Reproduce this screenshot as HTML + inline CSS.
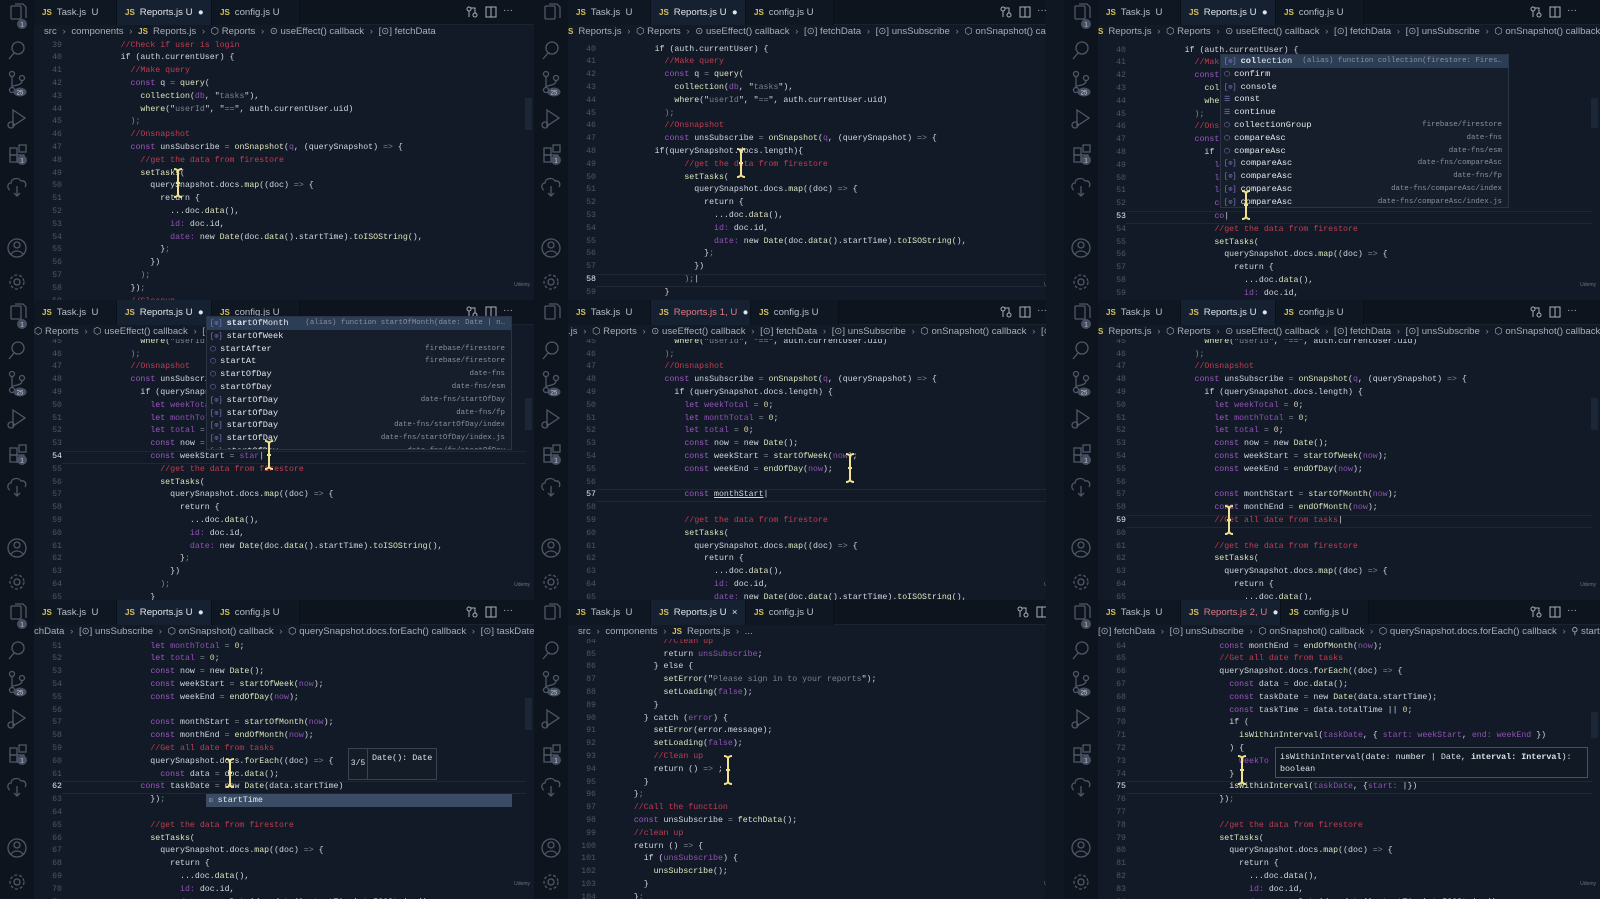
<!DOCTYPE html>
<html><head><meta charset="utf-8">
<style>
*{margin:0;padding:0;box-sizing:border-box}
body{width:1600px;height:899px;background:#101925;overflow:hidden;position:relative;font-family:"Liberation Sans",sans-serif}
.p{position:absolute;overflow:hidden;background:#111a26}
.ab{position:absolute;left:0;top:0;width:34px;height:300px;background:#0d141e}
.tb{position:absolute;left:34px;top:0;right:0;height:25px;background:#0d141e;border-bottom:1px solid #1a2330}
.tab{position:absolute;top:0;height:25px;line-height:25px;font-size:9.6px;color:#b8bec8;padding-left:8px;white-space:nowrap;background:#0f1722;border-right:1px solid #0a1019}
.tab.a{background:#152031;color:#dfe4ea}
.js{color:#d9c25c;font-weight:bold;font-size:8px;margin-right:5px}
.ti{position:absolute;top:6px;width:12px;height:12px}
.bc{position:absolute;left:34px;top:25px;right:0;height:14px;line-height:14px;font-size:9.6px;color:#a7aeb9;white-space:nowrap;padding-left:10px}
.bc i{font-style:normal;color:#7d8594;margin:0 3px}
.code{position:absolute;top:39px;left:0;right:0;bottom:0;overflow:hidden}
.in{position:absolute;left:0;right:0}
.ln{position:absolute;left:34px;width:28px;text-align:right;font-family:"Liberation Mono",monospace;font-size:8.25px;line-height:12.8px;color:#4e5665;white-space:pre}
.ln b{color:#e4e7ec;font-weight:normal}
.sr{position:absolute;left:81px;font-family:"Liberation Mono",monospace;font-size:8.25px;line-height:12.8px;color:#d3d8e0;white-space:pre}
.k{color:#a15ac6}.c{color:#c23d52}.f{color:#dfe5c0}.s{color:#7c828f}.v{color:#9153b6}.n{color:#dacf9f}.d{color:#7f8591}
.cur{position:absolute;left:62px;right:8px;height:12.8px;border-top:1px solid #1d2735;border-bottom:1px solid #1d2735}
.pop{position:absolute;background:#161e2b;border:1px solid #2b3444;font-family:"Liberation Mono",monospace;font-size:8.6px;color:#e5e8ed;overflow:hidden}
.pop div{height:12.8px;line-height:12.8px;padding-left:3px;white-space:nowrap;position:relative}
.pop div.sel{background:#2c3e56}
.pop em{font-style:normal;color:#8b7fd0;font-size:7px;margin-right:4px}
.pop span{position:absolute;right:6px;color:#8a909c;font-size:7.4px}
.sb{position:absolute;right:2px;width:7px;background:#1b2636}
.ud{position:absolute;right:4px;bottom:12px;font-size:5px;color:#6c7380}
.ib{position:absolute;width:10px;height:30px}
</style></head><body>

<!-- shared svg defs via repeated markup -->

<!-- ============ P1 ============ -->
<div class="p" style="left:0;top:0;width:534px;height:300px">
<div class="ab"><svg width="34" height="300" fill="none" stroke="#4f5867" stroke-width="1.3"><rect x="11" y="6" width="10" height="13" rx="1"/><path d="M15 4h8l3 3v11"/><circle cx="22" cy="24" r="5" fill="#465062" stroke="none"/><text x="22" y="26.5" font-size="6.5" fill="#d0d4da" stroke="none" text-anchor="middle" font-family="Liberation Sans">1</text><circle cx="18" cy="48" r="6"/><path d="M14 53l-5 6"/><circle cx="12" cy="74" r="2.5"/><circle cx="12" cy="90" r="2.5"/><circle cx="22" cy="78" r="2.5"/><path d="M12 77v10M22 81c0 5-10 4-10 6"/><ellipse cx="20" cy="92" rx="6.5" ry="4.5" fill="#465062" stroke="none"/><text x="20" y="94.5" font-size="6" fill="#d0d4da" stroke="none" text-anchor="middle" font-family="Liberation Sans">25</text><path d="M13 110l12 8-12 8z"/><circle cx="11" cy="125" r="3"/><rect x="10" y="148" width="7" height="7"/><rect x="10" y="155" width="7" height="7"/><rect x="17" y="155" width="7" height="7"/><rect x="19" y="145" width="7" height="7"/><circle cx="22" cy="160" r="5" fill="#465062" stroke="none"/><text x="22" y="162.5" font-size="6.5" fill="#d0d4da" stroke="none" text-anchor="middle" font-family="Liberation Sans">1</text><path d="M10 190c-3-1-3-7 1-7 0-5 8-6 10-2 4-1 6 3 4 6M17 186v10M14 193l3 3 3-3"/><circle cx="17" cy="248" r="9"/><circle cx="17" cy="245" r="3"/><path d="M11 254c3-4 9-4 12 0"/><circle cx="17" cy="282" r="3"/><circle cx="17" cy="282" r="7" stroke-dasharray="3 2"/></svg></div>
<div class="tb"><div class="tab" style="left:0;width:83px"><span class="js">JS</span>Task.js&nbsp; U</div><div class="tab a" style="left:83px;width:95px"><span class="js">JS</span>Reports.js U&nbsp; ●</div><div class="tab" style="left:178px;width:88px"><span class="js">JS</span>config.js U</div>
<svg class="ti" style="left:432px" fill="none" stroke="#aab0ba"><circle cx="3" cy="3" r="2"/><circle cx="9" cy="9" r="2"/><path d="M3 5v6M9 7V2H5"/></svg><svg class="ti" style="left:451px" fill="none" stroke="#aab0ba"><rect x="1" y="1" width="10" height="10"/><path d="M6 1v10"/></svg><div style="position:absolute;left:469px;top:0;line-height:22px;color:#aab0ba;font-size:10px">···</div></div>
<div class="bc">src <i>›</i> components <i>›</i> <span class="js">JS</span>Reports.js <i>›</i> ⬡ Reports <i>›</i> ⊙ useEffect() callback <i>›</i> [⊙] fetchData</div>
<div class="code"><div class="in" style="top:0.6px">
<div class="ln">39
40
41
42
43
44
45
46
47
48
49
50
51
52
53
54
55
56
57
58
59</div>
<div class="sr">        <span class="c">//Check if user is login</span>
        if (auth.currentUser) {
          <span class="c">//Make query</span>
          <span class="k">const</span> q <span class="d">=</span> <span class="f">query</span>(
            <span class="f">collection</span>(<span class="v">db</span>, "<span class="s">tasks</span>"),
            <span class="f">where</span>("<span class="s">userId</span>", "<span class="s">==</span>", auth.currentUser.uid)
          <span class="d">);</span>
          <span class="c">//Onsnapshot</span>
          <span class="k">const</span> unsSubscribe <span class="d">=</span> <span class="f">onSnapshot</span>(<span class="v">q</span>, (querySnapshot) <span class="d">=&gt;</span> {
            <span class="c">//get the data from firestore</span>
            <span class="f">setTasks</span>(
              querySnapshot.docs.<span class="f">map</span>((doc) <span class="d">=&gt;</span> {
                return {
                  ...doc.<span class="f">data</span>(),
                  <span class="v">id:</span> doc.id,
                  <span class="v">date:</span> new <span class="f">Date</span>(doc.<span class="f">data</span>().startTime).<span class="f">toISOString</span>(),
                }<span class="d">;</span>
              })
            <span class="d">);</span>
          })<span class="d">;</span>
          <span class="c">//Cleanup</span></div></div></div>
<div class="sb" style="top:98px;height:32px"></div>
<svg class="ib" style="left:173px;top:168px" viewBox="0 0 10 30" fill="none" stroke="#f2e28c" stroke-width="2"><path d="M1 1c2 0 4 1 4 3v22c0 2-2 3-4 3M9 1c-2 0-4 1-4 3v22c0 2 2 3 4 3M3 15h4"/></svg>
<div class="ud">Udemy</div></div>

<!-- ============ P2 ============ -->
<div class="p" style="left:534px;top:0;width:530px;height:300px">
<div class="ab"><svg width="34" height="300" fill="none" stroke="#4f5867" stroke-width="1.3"><rect x="11" y="6" width="10" height="13" rx="1"/><path d="M15 4h8l3 3v11"/><circle cx="18" cy="48" r="6"/><path d="M14 53l-5 6"/><circle cx="12" cy="74" r="2.5"/><circle cx="12" cy="90" r="2.5"/><circle cx="22" cy="78" r="2.5"/><path d="M12 77v10M22 81c0 5-10 4-10 6"/><ellipse cx="20" cy="92" rx="6.5" ry="4.5" fill="#465062" stroke="none"/><text x="20" y="94.5" font-size="6" fill="#d0d4da" stroke="none" text-anchor="middle" font-family="Liberation Sans">25</text><path d="M13 110l12 8-12 8z"/><circle cx="11" cy="125" r="3"/><rect x="10" y="148" width="7" height="7"/><rect x="10" y="155" width="7" height="7"/><rect x="17" y="155" width="7" height="7"/><rect x="19" y="145" width="7" height="7"/><circle cx="22" cy="160" r="5" fill="#465062" stroke="none"/><text x="22" y="162.5" font-size="6.5" fill="#d0d4da" stroke="none" text-anchor="middle" font-family="Liberation Sans">1</text><path d="M10 190c-3-1-3-7 1-7 0-5 8-6 10-2 4-1 6 3 4 6M17 186v10M14 193l3 3 3-3"/><circle cx="17" cy="248" r="9"/><circle cx="17" cy="245" r="3"/><path d="M11 254c3-4 9-4 12 0"/><circle cx="17" cy="282" r="3"/><circle cx="17" cy="282" r="7" stroke-dasharray="3 2"/></svg></div>
<div class="tb"><div class="tab" style="left:0;width:83px"><span class="js">JS</span>Task.js&nbsp; U</div><div class="tab a" style="left:83px;width:95px"><span class="js">JS</span>Reports.js U&nbsp; ●</div><div class="tab" style="left:178px;width:88px"><span class="js">JS</span>config.js U</div>
<svg class="ti" style="left:432px" fill="none" stroke="#aab0ba"><circle cx="3" cy="3" r="2"/><circle cx="9" cy="9" r="2"/><path d="M3 5v6M9 7V2H5"/></svg><svg class="ti" style="left:451px" fill="none" stroke="#aab0ba"><rect x="1" y="1" width="10" height="10"/><path d="M6 1v10"/></svg><div style="position:absolute;left:469px;top:0;line-height:22px;color:#aab0ba;font-size:10px">···</div></div>
<div class="bc" style="padding-left:0"><span class="js">S</span>Reports.js <i>›</i> ⬡ Reports <i>›</i> ⊙ useEffect() callback <i>›</i> [⊙] fetchData <i>›</i> [⊙] unsSubscribe <i>›</i> ⬡ onSnapshot() callback</div>
<div class="code"><div class="in" style="top:4.6px">
<div class="cur" style="top:230.4px"></div>
<div class="ln">40
41
42
43
44
45
46
47
48
49
50
51
52
53
54
55
56
57
<b>58</b>
59</div>
<div class="sr">        if (auth.currentUser) {
          <span class="c">//Make query</span>
          <span class="k">const</span> q <span class="d">=</span> <span class="f">query</span>(
            <span class="f">collection</span>(<span class="v">db</span>, "<span class="s">tasks</span>"),
            <span class="f">where</span>("<span class="s">userId</span>", "<span class="s">==</span>", auth.currentUser.uid)
          <span class="d">);</span>
          <span class="c">//Onsnapshot</span>
          <span class="k">const</span> unsSubscribe <span class="d">=</span> <span class="f">onSnapshot</span>(<span class="v">q</span>, (querySnapshot) <span class="d">=&gt;</span> {
        if(querySnapshot.docs.length){
              <span class="c">//get the data from firestore</span>
              <span class="f">setTasks</span>(
                querySnapshot.docs.<span class="f">map</span>((doc) <span class="d">=&gt;</span> {
                  return {
                    ...doc.<span class="f">data</span>(),
                    <span class="v">id:</span> doc.id,
                    <span class="v">date:</span> new <span class="f">Date</span>(doc.<span class="f">data</span>().startTime).<span class="f">toISOString</span>(),
                  }<span class="d">;</span>
                })
              <span class="d">);</span>|
          }</div></div></div>
<div class="sb" style="top:98px;height:32px"></div>
<svg class="ib" style="left:202px;top:148px" viewBox="0 0 10 30" fill="none" stroke="#f2e28c" stroke-width="2"><path d="M1 1c2 0 4 1 4 3v22c0 2-2 3-4 3M9 1c-2 0-4 1-4 3v22c0 2 2 3 4 3M3 15h4"/></svg>
<div class="ud">Udemy</div></div>

<!-- ============ P3 ============ -->
<div class="p" style="left:1064px;top:0;width:536px;height:300px">
<div class="ab"><svg width="34" height="300" fill="none" stroke="#4f5867" stroke-width="1.3"><rect x="11" y="6" width="10" height="13" rx="1"/><path d="M15 4h8l3 3v11"/><circle cx="22" cy="24" r="5" fill="#465062" stroke="none"/><text x="22" y="26.5" font-size="6.5" fill="#d0d4da" stroke="none" text-anchor="middle" font-family="Liberation Sans">1</text><circle cx="18" cy="48" r="6"/><path d="M14 53l-5 6"/><circle cx="12" cy="74" r="2.5"/><circle cx="12" cy="90" r="2.5"/><circle cx="22" cy="78" r="2.5"/><path d="M12 77v10M22 81c0 5-10 4-10 6"/><ellipse cx="20" cy="92" rx="6.5" ry="4.5" fill="#465062" stroke="none"/><text x="20" y="94.5" font-size="6" fill="#d0d4da" stroke="none" text-anchor="middle" font-family="Liberation Sans">25</text><path d="M13 110l12 8-12 8z"/><circle cx="11" cy="125" r="3"/><rect x="10" y="148" width="7" height="7"/><rect x="10" y="155" width="7" height="7"/><rect x="17" y="155" width="7" height="7"/><rect x="19" y="145" width="7" height="7"/><circle cx="22" cy="160" r="5" fill="#465062" stroke="none"/><text x="22" y="162.5" font-size="6.5" fill="#d0d4da" stroke="none" text-anchor="middle" font-family="Liberation Sans">1</text><path d="M10 190c-3-1-3-7 1-7 0-5 8-6 10-2 4-1 6 3 4 6M17 186v10M14 193l3 3 3-3"/><circle cx="17" cy="248" r="9"/><circle cx="17" cy="245" r="3"/><path d="M11 254c3-4 9-4 12 0"/><circle cx="17" cy="282" r="3"/><circle cx="17" cy="282" r="7" stroke-dasharray="3 2"/></svg></div>
<div class="tb"><div class="tab" style="left:0;width:83px"><span class="js">JS</span>Task.js&nbsp; U</div><div class="tab a" style="left:83px;width:95px"><span class="js">JS</span>Reports.js U&nbsp; ●</div><div class="tab" style="left:178px;width:88px"><span class="js">JS</span>config.js U</div>
<svg class="ti" style="left:432px" fill="none" stroke="#aab0ba"><circle cx="3" cy="3" r="2"/><circle cx="9" cy="9" r="2"/><path d="M3 5v6M9 7V2H5"/></svg><svg class="ti" style="left:451px" fill="none" stroke="#aab0ba"><rect x="1" y="1" width="10" height="10"/><path d="M6 1v10"/></svg><div style="position:absolute;left:469px;top:0;line-height:22px;color:#aab0ba;font-size:10px">···</div></div>
<div class="bc" style="padding-left:0"><span class="js">S</span>Reports.js <i>›</i> ⬡ Reports <i>›</i> ⊙ useEffect() callback <i>›</i> [⊙] fetchData <i>›</i> [⊙] unsSubscribe <i>›</i> ⬡ onSnapshot() callback</div>
<div class="code"><div class="in" style="top:5.6px">
<div class="cur" style="top:166.4px"></div>
<div class="ln">40
41
42
43
44
45
46
47
48
49
50
51
52
<b>53</b>
54
55
56
57
58
59</div>
<div class="sr">        if (auth.currentUser) {
          <span class="c">//Make query</span>
          <span class="k">const</span> q <span class="d">=</span> <span class="f">query</span>(
            <span class="f">collection</span>(<span class="v">db</span>, "<span class="s">tasks</span>"),
            <span class="f">where</span>("<span class="s">userId</span>", "<span class="s">==</span>", auth.currentUser.uid)
          <span class="d">);</span>
          <span class="c">//Onsnapshot</span>
          <span class="k">const</span> unsSubscribe <span class="d">=</span> <span class="f">onSnapshot</span>(<span class="v">q</span>, (querySnapshot) <span class="d">=&gt;</span> {
            if (querySnapshot.docs.length) {
              <span class="k">let</span> <span class="v">weekTotal</span> <span class="d">=</span> <span class="n">0</span>;
              <span class="k">let</span> <span class="v">monthTotal</span> <span class="d">=</span> <span class="n">0</span>;
              <span class="k">let</span> <span class="v">total</span> <span class="d">=</span> <span class="n">0</span>;
              <span class="k">const</span> now <span class="d">=</span> new <span class="f">Date</span>();
              <span class="k">co</span>|
              <span class="c">//get the data from firestore</span>
              <span class="f">setTasks</span>(
                querySnapshot.docs.<span class="f">map</span>((doc) <span class="d">=&gt;</span> {
                  return {
                    ...doc.<span class="f">data</span>(),
                    <span class="v">id:</span> doc.id,</div></div></div>
<div class="pop" style="left:156px;top:54px;width:289px;height:154px">
<div class="sel"><em>[⊙]</em><b>col</b>lection<span>(alias) function collection(firestore: Fires…</span></div>
<div><em>⬡</em>confirm</div>
<div><em>[⊙]</em>console</div>
<div><em>☰</em>const</div>
<div><em>☰</em>continue</div>
<div><em>⬡</em>collectionGroup<span>firebase/firestore</span></div>
<div><em>⬡</em>compareAsc<span>date-fns</span></div>
<div><em>⬡</em>compareAsc<span>date-fns/esm</span></div>
<div><em>[⊙]</em>compareAsc<span>date-fns/compareAsc</span></div>
<div><em>[⊙]</em>compareAsc<span>date-fns/fp</span></div>
<div><em>[⊙]</em>compareAsc<span>date-fns/compareAsc/index</span></div>
<div><em>[⊙]</em>compareAsc<span>date-fns/compareAsc/index.js</span></div>
</div>
<div class="sb" style="top:98px;height:30px"></div>
<svg class="ib" style="left:177px;top:190px" viewBox="0 0 10 30" fill="none" stroke="#f2e28c" stroke-width="2"><path d="M1 1c2 0 4 1 4 3v22c0 2-2 3-4 3M9 1c-2 0-4 1-4 3v22c0 2 2 3 4 3M3 15h4"/></svg>
<div class="ud">Udemy</div></div>

<!-- ============ P4 ============ -->
<div class="p" style="left:0;top:300px;width:534px;height:300px">
<div class="ab"><svg width="34" height="300" fill="none" stroke="#4f5867" stroke-width="1.3"><rect x="11" y="6" width="10" height="13" rx="1"/><path d="M15 4h8l3 3v11"/><circle cx="22" cy="24" r="5" fill="#465062" stroke="none"/><text x="22" y="26.5" font-size="6.5" fill="#d0d4da" stroke="none" text-anchor="middle" font-family="Liberation Sans">1</text><circle cx="18" cy="48" r="6"/><path d="M14 53l-5 6"/><circle cx="12" cy="74" r="2.5"/><circle cx="12" cy="90" r="2.5"/><circle cx="22" cy="78" r="2.5"/><path d="M12 77v10M22 81c0 5-10 4-10 6"/><ellipse cx="20" cy="92" rx="6.5" ry="4.5" fill="#465062" stroke="none"/><text x="20" y="94.5" font-size="6" fill="#d0d4da" stroke="none" text-anchor="middle" font-family="Liberation Sans">25</text><path d="M13 110l12 8-12 8z"/><circle cx="11" cy="125" r="3"/><rect x="10" y="148" width="7" height="7"/><rect x="10" y="155" width="7" height="7"/><rect x="17" y="155" width="7" height="7"/><rect x="19" y="145" width="7" height="7"/><circle cx="22" cy="160" r="5" fill="#465062" stroke="none"/><text x="22" y="162.5" font-size="6.5" fill="#d0d4da" stroke="none" text-anchor="middle" font-family="Liberation Sans">1</text><path d="M10 190c-3-1-3-7 1-7 0-5 8-6 10-2 4-1 6 3 4 6M17 186v10M14 193l3 3 3-3"/><circle cx="17" cy="248" r="9"/><circle cx="17" cy="245" r="3"/><path d="M11 254c3-4 9-4 12 0"/><circle cx="17" cy="282" r="3"/><circle cx="17" cy="282" r="7" stroke-dasharray="3 2"/></svg></div>
<div class="tb"><div class="tab" style="left:0;width:83px"><span class="js">JS</span>Task.js&nbsp; U</div><div class="tab a" style="left:83px;width:95px"><span class="js">JS</span>Reports.js U&nbsp; ●</div><div class="tab" style="left:178px;width:88px"><span class="js">JS</span>config.js U</div>
<svg class="ti" style="left:432px" fill="none" stroke="#aab0ba"><circle cx="3" cy="3" r="2"/><circle cx="9" cy="9" r="2"/><path d="M3 5v6M9 7V2H5"/></svg><svg class="ti" style="left:451px" fill="none" stroke="#aab0ba"><rect x="1" y="1" width="10" height="10"/><path d="M6 1v10"/></svg><div style="position:absolute;left:469px;top:0;line-height:22px;color:#aab0ba;font-size:10px">···</div></div>
<div class="bc" style="padding-left:0">⬡ Reports <i>›</i> ⬡ useEffect() callback <i>›</i> [⊙]</div>
<div class="code"><div class="in" style="top:-3.2px">
<div class="cur" style="top:115.2px"></div>
<div class="ln">45
46
47
48
49
50
51
52
53
<b>54</b>
55
56
57
58
59
60
61
62
63
64
65</div>
<div class="sr">            <span class="f">where</span>("<span class="s">userId</span>", "<span class="s">==</span>", auth.currentUser.uid)
          <span class="d">);</span>
          <span class="c">//Onsnapshot</span>
          <span class="k">const</span> unsSubscribe <span class="d">=</span> <span class="f">onSnapshot</span>(<span class="v">q</span>, (querySnapshot) <span class="d">=&gt;</span> {
            if (querySnapshot.docs.length) {
              <span class="k">let</span> <span class="v">weekTotal</span> <span class="d">=</span> <span class="n">0</span>;
              <span class="k">let</span> <span class="v">monthTotal</span> <span class="d">=</span> <span class="n">0</span>;
              <span class="k">let</span> <span class="v">total</span> <span class="d">=</span> <span class="n">0</span>;
              <span class="k">const</span> now <span class="d">=</span> new <span class="f">Date</span>();
              <span class="k">const</span> weekStart <span class="d">=</span> <span class="v">star</span>|
                <span class="c">//get the data from firestore</span>
                <span class="f">setTasks</span>(
                  querySnapshot.docs.<span class="f">map</span>((doc) <span class="d">=&gt;</span> {
                    return {
                      ...doc.<span class="f">data</span>(),
                      <span class="v">id:</span> doc.id,
                      <span class="v">date:</span> new <span class="f">Date</span>(doc.<span class="f">data</span>().startTime).<span class="f">toISOString</span>(),
                    }<span class="d">;</span>
                  })
                <span class="d">);</span>
              }</div></div></div>
<div class="pop" style="left:206px;top:16px;width:306px;height:134px">
<div class="sel"><em>[⊙]</em><b>star</b>tOfMonth<span>(alias) function startOfMonth(date: Date | n…</span></div>
<div><em>[⊙]</em>startOfWeek</div>
<div><em>⬡</em>startAfter<span>firebase/firestore</span></div>
<div><em>⬡</em>startAt<span>firebase/firestore</span></div>
<div><em>⬡</em>startOfDay<span>date-fns</span></div>
<div><em>⬡</em>startOfDay<span>date-fns/esm</span></div>
<div><em>[⊙]</em>startOfDay<span>date-fns/startOfDay</span></div>
<div><em>[⊙]</em>startOfDay<span>date-fns/fp</span></div>
<div><em>[⊙]</em>startOfDay<span>date-fns/startOfDay/index</span></div>
<div><em>[⊙]</em>startOfDay<span>date-fns/startOfDay/index.js</span></div>
<div><em>[⊙]</em>startOfDay<span>date-fns/fp/startOfDay</span></div>
</div>
<div class="sb" style="top:98px;height:32px"></div>
<svg class="ib" style="left:264px;top:140px" viewBox="0 0 10 30" fill="none" stroke="#f2e28c" stroke-width="2"><path d="M1 1c2 0 4 1 4 3v22c0 2-2 3-4 3M9 1c-2 0-4 1-4 3v22c0 2 2 3 4 3M3 15h4"/></svg>
<div class="ud">Udemy</div></div>

<!-- ============ P5 ============ -->
<div class="p" style="left:534px;top:300px;width:530px;height:300px">
<div class="ab"><svg width="34" height="300" fill="none" stroke="#4f5867" stroke-width="1.3"><rect x="11" y="6" width="10" height="13" rx="1"/><path d="M15 4h8l3 3v11"/><circle cx="18" cy="48" r="6"/><path d="M14 53l-5 6"/><circle cx="12" cy="74" r="2.5"/><circle cx="12" cy="90" r="2.5"/><circle cx="22" cy="78" r="2.5"/><path d="M12 77v10M22 81c0 5-10 4-10 6"/><ellipse cx="20" cy="92" rx="6.5" ry="4.5" fill="#465062" stroke="none"/><text x="20" y="94.5" font-size="6" fill="#d0d4da" stroke="none" text-anchor="middle" font-family="Liberation Sans">25</text><path d="M13 110l12 8-12 8z"/><circle cx="11" cy="125" r="3"/><rect x="10" y="148" width="7" height="7"/><rect x="10" y="155" width="7" height="7"/><rect x="17" y="155" width="7" height="7"/><rect x="19" y="145" width="7" height="7"/><circle cx="22" cy="160" r="5" fill="#465062" stroke="none"/><text x="22" y="162.5" font-size="6.5" fill="#d0d4da" stroke="none" text-anchor="middle" font-family="Liberation Sans">1</text><path d="M10 190c-3-1-3-7 1-7 0-5 8-6 10-2 4-1 6 3 4 6M17 186v10M14 193l3 3 3-3"/><circle cx="17" cy="248" r="9"/><circle cx="17" cy="245" r="3"/><path d="M11 254c3-4 9-4 12 0"/><circle cx="17" cy="282" r="3"/><circle cx="17" cy="282" r="7" stroke-dasharray="3 2"/></svg></div>
<div class="tb"><div class="tab" style="left:0;width:83px"><span class="js">JS</span>Task.js&nbsp; U</div><div class="tab a" style="left:83px;width:100px"><span class="js">JS</span><span style="color:#e07a82">Reports.js 1, U</span>&nbsp; ●</div><div class="tab" style="left:183px;width:88px"><span class="js">JS</span>config.js U</div>
<svg class="ti" style="left:432px" fill="none" stroke="#aab0ba"><circle cx="3" cy="3" r="2"/><circle cx="9" cy="9" r="2"/><path d="M3 5v6M9 7V2H5"/></svg><svg class="ti" style="left:451px" fill="none" stroke="#aab0ba"><rect x="1" y="1" width="10" height="10"/><path d="M6 1v10"/></svg><div style="position:absolute;left:469px;top:0;line-height:22px;color:#aab0ba;font-size:10px">···</div></div>
<div class="bc" style="padding-left:0">.js <i>›</i> ⬡ Reports <i>›</i> ⊙ useEffect() callback <i>›</i> [⊙] fetchData <i>›</i> [⊙] unsSubscribe <i>›</i> ⬡ onSnapshot() callback <i>›</i> [⊙] montl</div>
<div class="code"><div class="in" style="top:-3.2px">
<div class="cur" style="top:153.6px"></div>
<div class="ln">45
46
47
48
49
50
51
52
53
54
55
56
<b>57</b>
58
59
60
61
62
63
64
65</div>
<div class="sr">            <span class="f">where</span>("<span class="s">userId</span>", "<span class="s">==</span>", auth.currentUser.uid)
          <span class="d">);</span>
          <span class="c">//Onsnapshot</span>
          <span class="k">const</span> unsSubscribe <span class="d">=</span> <span class="f">onSnapshot</span>(<span class="v">q</span>, (querySnapshot) <span class="d">=&gt;</span> {
            if (querySnapshot.docs.length) {
              <span class="k">let</span> <span class="v">weekTotal</span> <span class="d">=</span> <span class="n">0</span>;
              <span class="k">let</span> <span class="v">monthTotal</span> <span class="d">=</span> <span class="n">0</span>;
              <span class="k">let</span> <span class="v">total</span> <span class="d">=</span> <span class="n">0</span>;
              <span class="k">const</span> now <span class="d">=</span> new <span class="f">Date</span>();
              <span class="k">const</span> weekStart <span class="d">=</span> <span class="f">startOfWeek</span>(<span class="v">now</span>);
              <span class="k">const</span> weekEnd <span class="d">=</span> <span class="f">endOfDay</span>(<span class="v">now</span>);

              <span class="k">const</span> <u>monthStart</u>|

              <span class="c">//get the data from firestore</span>
              <span class="f">setTasks</span>(
                querySnapshot.docs.<span class="f">map</span>((doc) <span class="d">=&gt;</span> {
                  return {
                    ...doc.<span class="f">data</span>(),
                    <span class="v">id:</span> doc.id,
                    <span class="v">date:</span> new <span class="f">Date</span>(doc.<span class="f">data</span>().startTime).<span class="f">toISOString</span>(),</div></div></div>
<div class="sb" style="top:98px;height:32px"></div>
<svg class="ib" style="left:311px;top:153px" viewBox="0 0 10 30" fill="none" stroke="#f2e28c" stroke-width="2"><path d="M1 1c2 0 4 1 4 3v22c0 2-2 3-4 3M9 1c-2 0-4 1-4 3v22c0 2 2 3 4 3M3 15h4"/></svg>
<div class="ud">Udemy</div></div>

<!-- ============ P6 ============ -->
<div class="p" style="left:1064px;top:300px;width:536px;height:300px">
<div class="ab"><svg width="34" height="300" fill="none" stroke="#4f5867" stroke-width="1.3"><rect x="11" y="6" width="10" height="13" rx="1"/><path d="M15 4h8l3 3v11"/><circle cx="22" cy="24" r="5" fill="#465062" stroke="none"/><text x="22" y="26.5" font-size="6.5" fill="#d0d4da" stroke="none" text-anchor="middle" font-family="Liberation Sans">1</text><circle cx="18" cy="48" r="6"/><path d="M14 53l-5 6"/><circle cx="12" cy="74" r="2.5"/><circle cx="12" cy="90" r="2.5"/><circle cx="22" cy="78" r="2.5"/><path d="M12 77v10M22 81c0 5-10 4-10 6"/><ellipse cx="20" cy="92" rx="6.5" ry="4.5" fill="#465062" stroke="none"/><text x="20" y="94.5" font-size="6" fill="#d0d4da" stroke="none" text-anchor="middle" font-family="Liberation Sans">25</text><path d="M13 110l12 8-12 8z"/><circle cx="11" cy="125" r="3"/><rect x="10" y="148" width="7" height="7"/><rect x="10" y="155" width="7" height="7"/><rect x="17" y="155" width="7" height="7"/><rect x="19" y="145" width="7" height="7"/><circle cx="22" cy="160" r="5" fill="#465062" stroke="none"/><text x="22" y="162.5" font-size="6.5" fill="#d0d4da" stroke="none" text-anchor="middle" font-family="Liberation Sans">1</text><path d="M10 190c-3-1-3-7 1-7 0-5 8-6 10-2 4-1 6 3 4 6M17 186v10M14 193l3 3 3-3"/><circle cx="17" cy="248" r="9"/><circle cx="17" cy="245" r="3"/><path d="M11 254c3-4 9-4 12 0"/><circle cx="17" cy="282" r="3"/><circle cx="17" cy="282" r="7" stroke-dasharray="3 2"/></svg></div>
<div class="tb"><div class="tab" style="left:0;width:83px"><span class="js">JS</span>Task.js&nbsp; U</div><div class="tab a" style="left:83px;width:95px"><span class="js">JS</span>Reports.js U&nbsp; ●</div><div class="tab" style="left:178px;width:88px"><span class="js">JS</span>config.js U</div>
<svg class="ti" style="left:432px" fill="none" stroke="#aab0ba"><circle cx="3" cy="3" r="2"/><circle cx="9" cy="9" r="2"/><path d="M3 5v6M9 7V2H5"/></svg><svg class="ti" style="left:451px" fill="none" stroke="#aab0ba"><rect x="1" y="1" width="10" height="10"/><path d="M6 1v10"/></svg><div style="position:absolute;left:469px;top:0;line-height:22px;color:#aab0ba;font-size:10px">···</div></div>
<div class="bc" style="padding-left:0"><span class="js">S</span>Reports.js <i>›</i> ⬡ Reports <i>›</i> ⊙ useEffect() callback <i>›</i> [⊙] fetchData <i>›</i> [⊙] unsSubscribe <i>›</i> ⬡ onSnapshot() callback</div>
<div class="code"><div class="in" style="top:-3.2px">
<div class="cur" style="top:179.2px"></div>
<div class="ln">45
46
47
48
49
50
51
52
53
54
55
56
57
58
<b>59</b>
60
61
62
63
64
65</div>
<div class="sr">            <span class="f">where</span>("<span class="s">userId</span>", "<span class="s">==</span>", auth.currentUser.uid)
          <span class="d">);</span>
          <span class="c">//Onsnapshot</span>
          <span class="k">const</span> unsSubscribe <span class="d">=</span> <span class="f">onSnapshot</span>(<span class="v">q</span>, (querySnapshot) <span class="d">=&gt;</span> {
            if (querySnapshot.docs.length) {
              <span class="k">let</span> <span class="v">weekTotal</span> <span class="d">=</span> <span class="n">0</span>;
              <span class="k">let</span> <span class="v">monthTotal</span> <span class="d">=</span> <span class="n">0</span>;
              <span class="k">let</span> <span class="v">total</span> <span class="d">=</span> <span class="n">0</span>;
              <span class="k">const</span> now <span class="d">=</span> new <span class="f">Date</span>();
              <span class="k">const</span> weekStart <span class="d">=</span> <span class="f">startOfWeek</span>(<span class="v">now</span>);
              <span class="k">const</span> weekEnd <span class="d">=</span> <span class="f">endOfDay</span>(<span class="v">now</span>);

              <span class="k">const</span> monthStart <span class="d">=</span> <span class="f">startOfMonth</span>(<span class="v">now</span>);
              <span class="k">const</span> monthEnd <span class="d">=</span> <span class="f">endOfMonth</span>(<span class="v">now</span>);
              <span class="c">//Get all date from tasks</span>|

              <span class="c">//get the data from firestore</span>
              <span class="f">setTasks</span>(
                querySnapshot.docs.<span class="f">map</span>((doc) <span class="d">=&gt;</span> {
                  return {
                    ...doc.<span class="f">data</span>(),</div></div></div>
<div class="sb" style="top:98px;height:32px"></div>
<svg class="ib" style="left:160px;top:205px" viewBox="0 0 10 30" fill="none" stroke="#f2e28c" stroke-width="2"><path d="M1 1c2 0 4 1 4 3v22c0 2-2 3-4 3M9 1c-2 0-4 1-4 3v22c0 2 2 3 4 3M3 15h4"/></svg>
<div class="ud">Udemy</div></div>

<!-- ============ P7 ============ -->
<div class="p" style="left:0;top:600px;width:534px;height:299px">
<div class="ab"><svg width="34" height="300" fill="none" stroke="#4f5867" stroke-width="1.3"><rect x="11" y="6" width="10" height="13" rx="1"/><path d="M15 4h8l3 3v11"/><circle cx="22" cy="24" r="5" fill="#465062" stroke="none"/><text x="22" y="26.5" font-size="6.5" fill="#d0d4da" stroke="none" text-anchor="middle" font-family="Liberation Sans">1</text><circle cx="18" cy="48" r="6"/><path d="M14 53l-5 6"/><circle cx="12" cy="74" r="2.5"/><circle cx="12" cy="90" r="2.5"/><circle cx="22" cy="78" r="2.5"/><path d="M12 77v10M22 81c0 5-10 4-10 6"/><ellipse cx="20" cy="92" rx="6.5" ry="4.5" fill="#465062" stroke="none"/><text x="20" y="94.5" font-size="6" fill="#d0d4da" stroke="none" text-anchor="middle" font-family="Liberation Sans">25</text><path d="M13 110l12 8-12 8z"/><circle cx="11" cy="125" r="3"/><rect x="10" y="148" width="7" height="7"/><rect x="10" y="155" width="7" height="7"/><rect x="17" y="155" width="7" height="7"/><rect x="19" y="145" width="7" height="7"/><circle cx="22" cy="160" r="5" fill="#465062" stroke="none"/><text x="22" y="162.5" font-size="6.5" fill="#d0d4da" stroke="none" text-anchor="middle" font-family="Liberation Sans">1</text><path d="M10 190c-3-1-3-7 1-7 0-5 8-6 10-2 4-1 6 3 4 6M17 186v10M14 193l3 3 3-3"/><circle cx="17" cy="248" r="9"/><circle cx="17" cy="245" r="3"/><path d="M11 254c3-4 9-4 12 0"/><circle cx="17" cy="282" r="3"/><circle cx="17" cy="282" r="7" stroke-dasharray="3 2"/></svg></div>
<div class="tb"><div class="tab" style="left:0;width:83px"><span class="js">JS</span>Task.js&nbsp; U</div><div class="tab a" style="left:83px;width:95px"><span class="js">JS</span>Reports.js U&nbsp; ●</div><div class="tab" style="left:178px;width:88px"><span class="js">JS</span>config.js U</div>
<svg class="ti" style="left:432px" fill="none" stroke="#aab0ba"><circle cx="3" cy="3" r="2"/><circle cx="9" cy="9" r="2"/><path d="M3 5v6M9 7V2H5"/></svg><svg class="ti" style="left:451px" fill="none" stroke="#aab0ba"><rect x="1" y="1" width="10" height="10"/><path d="M6 1v10"/></svg><div style="position:absolute;left:469px;top:0;line-height:22px;color:#aab0ba;font-size:10px">···</div></div>
<div class="bc" style="padding-left:0">chData <i>›</i> [⊙] unsSubscribe <i>›</i> ⬡ onSnapshot() callback <i>›</i> ⬡ querySnapshot.docs.forEach() callback <i>›</i> [⊙] taskDate</div>
<div class="code"><div class="in" style="top:1.6px">
<div class="cur" style="top:140.8px"></div>
<div class="ln">51
52
53
54
55
56
57
58
59
60
61
<b>62</b>
63
64
65
66
67
68
69
70
71</div>
<div class="sr">              <span class="k">let</span> <span class="v">monthTotal</span> <span class="d">=</span> <span class="n">0</span>;
              <span class="k">let</span> <span class="v">total</span> <span class="d">=</span> <span class="n">0</span>;
              <span class="k">const</span> now <span class="d">=</span> new <span class="f">Date</span>();
              <span class="k">const</span> weekStart <span class="d">=</span> <span class="f">startOfWeek</span>(<span class="v">now</span>);
              <span class="k">const</span> weekEnd <span class="d">=</span> <span class="f">endOfDay</span>(<span class="v">now</span>);

              <span class="k">const</span> monthStart <span class="d">=</span> <span class="f">startOfMonth</span>(<span class="v">now</span>);
              <span class="k">const</span> monthEnd <span class="d">=</span> <span class="f">endOfMonth</span>(<span class="v">now</span>);
              <span class="c">//Get all date from tasks</span>
              querySnapshot.docs.<span class="f">forEach</span>((doc) <span class="d">=&gt;</span> {
                <span class="k">const</span> data <span class="d">=</span> doc.<span class="f">data</span>();
            <span class="k">const</span> taskDate <span class="d">=</span> new <span class="f">Date</span>(data.startTime)
              })<span class="d">;</span>

              <span class="c">//get the data from firestore</span>
              <span class="f">setTasks</span>(
                querySnapshot.docs.<span class="f">map</span>((doc) <span class="d">=&gt;</span> {
                  return {
                    ...doc.<span class="f">data</span>(),
                    <span class="v">id:</span> doc.id,
                    <span class="v">date:</span> new <span class="f">Date</span>(doc.<span class="f">data</span>().startTime).<span class="f">toISOString</span>(),</div></div></div>
<div style="position:absolute;left:348px;top:148px;width:89px;height:32px;background:#141c28;border:1px solid #3a4352;font-family:'Liberation Mono',monospace;font-size:8.4px;color:#dfe3e8"><div style="position:absolute;left:0;top:0;width:19px;height:30px;border-right:1px solid #3a4352;text-align:center;line-height:30px;font-size:8px">3/5</div><div style="position:absolute;left:23px;top:4px">Date(): Date</div></div>
<div style="position:absolute;left:206px;top:194px;width:306px;height:12.5px;background:#3a4c64;font-family:'Liberation Mono',monospace;font-size:8.4px;color:#e8ebef;line-height:12.5px;padding-left:3px"><span style="font-size:6px;color:#aab">⊡</span> startTime</div>
<div class="sb" style="top:98px;height:32px"></div>
<svg class="ib" style="left:225px;top:158px" viewBox="0 0 10 30" fill="none" stroke="#f2e28c" stroke-width="2"><path d="M1 1c2 0 4 1 4 3v22c0 2-2 3-4 3M9 1c-2 0-4 1-4 3v22c0 2 2 3 4 3M3 15h4"/></svg>
<div class="ud">Udemy</div></div>

<!-- ============ P8 ============ -->
<div class="p" style="left:534px;top:600px;width:530px;height:299px">
<div class="ab"><svg width="34" height="300" fill="none" stroke="#4f5867" stroke-width="1.3"><rect x="11" y="6" width="10" height="13" rx="1"/><path d="M15 4h8l3 3v11"/><circle cx="18" cy="48" r="6"/><path d="M14 53l-5 6"/><circle cx="12" cy="74" r="2.5"/><circle cx="12" cy="90" r="2.5"/><circle cx="22" cy="78" r="2.5"/><path d="M12 77v10M22 81c0 5-10 4-10 6"/><ellipse cx="20" cy="92" rx="6.5" ry="4.5" fill="#465062" stroke="none"/><text x="20" y="94.5" font-size="6" fill="#d0d4da" stroke="none" text-anchor="middle" font-family="Liberation Sans">25</text><path d="M13 110l12 8-12 8z"/><circle cx="11" cy="125" r="3"/><rect x="10" y="148" width="7" height="7"/><rect x="10" y="155" width="7" height="7"/><rect x="17" y="155" width="7" height="7"/><rect x="19" y="145" width="7" height="7"/><circle cx="22" cy="160" r="5" fill="#465062" stroke="none"/><text x="22" y="162.5" font-size="6.5" fill="#d0d4da" stroke="none" text-anchor="middle" font-family="Liberation Sans">1</text><path d="M10 190c-3-1-3-7 1-7 0-5 8-6 10-2 4-1 6 3 4 6M17 186v10M14 193l3 3 3-3"/><circle cx="17" cy="248" r="9"/><circle cx="17" cy="245" r="3"/><path d="M11 254c3-4 9-4 12 0"/><circle cx="17" cy="282" r="3"/><circle cx="17" cy="282" r="7" stroke-dasharray="3 2"/></svg></div>
<div class="tb"><div class="tab" style="left:0;width:83px"><span class="js">JS</span>Task.js&nbsp; U</div><div class="tab a" style="left:83px;width:95px"><span class="js">JS</span>Reports.js U&nbsp; ×</div><div class="tab" style="left:178px;width:88px"><span class="js">JS</span>config.js U</div>
<svg class="ti" style="left:449px" fill="none" stroke="#aab0ba"><circle cx="3" cy="3" r="2"/><circle cx="9" cy="9" r="2"/><path d="M3 5v6M9 7V2H5"/></svg><svg class="ti" style="left:468px" fill="none" stroke="#aab0ba"><rect x="1" y="1" width="10" height="10"/><path d="M6 1v10"/></svg></div>
<div class="bc">src <i>›</i> components <i>›</i> <span class="js">JS</span>Reports.js <i>›</i> ...</div>
<div class="code"><div class="in" style="top:-3.2px">
<div class="ln">84
85
86
87
88
89
90
91
92
93
94
95
96
97
98
99
100
101
102
103
104</div>
<div class="sr" style="left:80px">          <span class="c">//Clean up</span>
          return <span class="v">unsSubscribe</span>;
        } else {
          <span class="f">setError</span>("<span class="s">Please sign in to your reports</span>");
          <span class="f">setLoading</span>(<span class="v">false</span>);
        }
      } catch (<span class="v">error</span>) {
        <span class="f">setError</span>(error.message);
        <span class="f">setLoading</span>(<span class="v">false</span>);
        <span class="c">//Clean up</span>
        return () <span class="d">=&gt;</span> ;
      }
    }<span class="d">;</span>
    <span class="c">//Call the function</span>
    <span class="k">const</span> unsSubscribe <span class="d">=</span> <span class="f">fetchData</span>();
    <span class="c">//clean up</span>
    return () <span class="d">=&gt;</span> {
      if (<span class="v">unsSubscribe</span>) {
        <span class="f">unsSubscribe</span>();
      }
    }<span class="d">;</span></div></div></div>
<div class="sb" style="top:120px;height:26px"></div>
<svg class="ib" style="left:189px;top:155px" viewBox="0 0 10 30" fill="none" stroke="#f2e28c" stroke-width="2"><path d="M1 1c2 0 4 1 4 3v22c0 2-2 3-4 3M9 1c-2 0-4 1-4 3v22c0 2 2 3 4 3M3 15h4"/></svg>
<div class="ud">Udemy</div></div>

<!-- ============ P9 ============ -->
<div class="p" style="left:1064px;top:600px;width:536px;height:299px">
<div class="ab"><svg width="34" height="300" fill="none" stroke="#4f5867" stroke-width="1.3"><rect x="11" y="6" width="10" height="13" rx="1"/><path d="M15 4h8l3 3v11"/><circle cx="22" cy="24" r="5" fill="#465062" stroke="none"/><text x="22" y="26.5" font-size="6.5" fill="#d0d4da" stroke="none" text-anchor="middle" font-family="Liberation Sans">1</text><circle cx="18" cy="48" r="6"/><path d="M14 53l-5 6"/><circle cx="12" cy="74" r="2.5"/><circle cx="12" cy="90" r="2.5"/><circle cx="22" cy="78" r="2.5"/><path d="M12 77v10M22 81c0 5-10 4-10 6"/><ellipse cx="20" cy="92" rx="6.5" ry="4.5" fill="#465062" stroke="none"/><text x="20" y="94.5" font-size="6" fill="#d0d4da" stroke="none" text-anchor="middle" font-family="Liberation Sans">25</text><path d="M13 110l12 8-12 8z"/><circle cx="11" cy="125" r="3"/><rect x="10" y="148" width="7" height="7"/><rect x="10" y="155" width="7" height="7"/><rect x="17" y="155" width="7" height="7"/><rect x="19" y="145" width="7" height="7"/><circle cx="22" cy="160" r="5" fill="#465062" stroke="none"/><text x="22" y="162.5" font-size="6.5" fill="#d0d4da" stroke="none" text-anchor="middle" font-family="Liberation Sans">1</text><path d="M10 190c-3-1-3-7 1-7 0-5 8-6 10-2 4-1 6 3 4 6M17 186v10M14 193l3 3 3-3"/><circle cx="17" cy="248" r="9"/><circle cx="17" cy="245" r="3"/><path d="M11 254c3-4 9-4 12 0"/><circle cx="17" cy="282" r="3"/><circle cx="17" cy="282" r="7" stroke-dasharray="3 2"/></svg></div>
<div class="tb"><div class="tab" style="left:0;width:83px"><span class="js">JS</span>Task.js&nbsp; U</div><div class="tab a" style="left:83px;width:100px"><span class="js">JS</span><span style="color:#e07a82">Reports.js 2, U</span>&nbsp; ●</div><div class="tab" style="left:183px;width:88px"><span class="js">JS</span>config.js U</div>
<svg class="ti" style="left:432px" fill="none" stroke="#aab0ba"><circle cx="3" cy="3" r="2"/><circle cx="9" cy="9" r="2"/><path d="M3 5v6M9 7V2H5"/></svg><svg class="ti" style="left:451px" fill="none" stroke="#aab0ba"><rect x="1" y="1" width="10" height="10"/><path d="M6 1v10"/></svg><div style="position:absolute;left:469px;top:0;line-height:22px;color:#aab0ba;font-size:10px">···</div></div>
<div class="bc" style="padding-left:0">[⊙] fetchData <i>›</i> [⊙] unsSubscribe <i>›</i> ⬡ onSnapshot() callback <i>›</i> ⬡ querySnapshot.docs.forEach() callback <i>›</i> ⚲ start</div>
<div class="code"><div class="in" style="top:1.6px">
<div class="cur" style="top:140.8px"></div>
<div class="ln">64
65
66
67
68
69
70
71
72
73
74
<b>75</b>
76
77
78
79
80
81
82
83
84</div>
<div class="sr" style="left:86px">              <span class="k">const</span> monthEnd <span class="d">=</span> <span class="f">endOfMonth</span>(<span class="v">now</span>);
              <span class="c">//Get all date from tasks</span>
              querySnapshot.docs.<span class="f">forEach</span>((doc) <span class="d">=&gt;</span> {
                <span class="k">const</span> data <span class="d">=</span> doc.<span class="f">data</span>();
                <span class="k">const</span> taskDate <span class="d">=</span> new <span class="f">Date</span>(data.startTime);
                <span class="k">const</span> taskTime <span class="d">=</span> data.totalTime || <span class="n">0</span>;
                if (
                  <span class="f">isWithinInterval</span>(<span class="v">taskDate</span>, { <span class="v">start: weekStart</span>, <span class="v">end: weekEnd</span> })
                ) {
                  <span class="v">weekTo</span>
                }
                <span class="f">isWithinInterval</span>(<span class="v">taskDate</span>, {<span class="v">start:</span> |})
              })<span class="d">;</span>

              <span class="c">//get the data from firestore</span>
              <span class="f">setTasks</span>(
                querySnapshot.docs.<span class="f">map</span>((doc) <span class="d">=&gt;</span> {
                  return {
                    ...doc.<span class="f">data</span>(),
                    <span class="v">id:</span> doc.id,
                    <span class="v">date:</span> new <span class="f">Date</span>(doc.<span class="f">data</span>().startTime).<span class="f">toISOString</span>(),</div></div></div>
<div style="position:absolute;left:211px;top:147px;width:313px;height:31px;background:#111924;border:1px solid #4a5260;font-family:'Liberation Mono',monospace;font-size:8.4px;color:#dfe3e8;padding:3px 4px;line-height:12px;white-space:nowrap">isWithinInterval(date: number | Date, <b>interval: Interval</b>):<br>boolean</div>
<div class="sb" style="top:112px;height:26px"></div>
<svg class="ib" style="left:173px;top:155px" viewBox="0 0 10 30" fill="none" stroke="#f2e28c" stroke-width="2"><path d="M1 1c2 0 4 1 4 3v22c0 2-2 3-4 3M9 1c-2 0-4 1-4 3v22c0 2 2 3 4 3M3 15h4"/></svg>
<div class="ud">Udemy</div></div>

<!-- strip between col2 and col3 -->
<div style="position:absolute;left:1046px;top:0;width:18px;height:899px;background:#0f1722"></div>
</body></html>
